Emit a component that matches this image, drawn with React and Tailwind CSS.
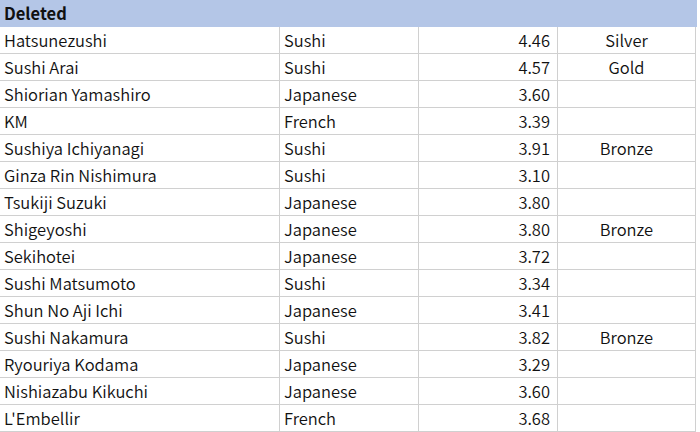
import React from 'react';

const rows = [
  ['Hatsunezushi', 'Sushi', '4.46', 'Silver'],
  ['Sushi Arai', 'Sushi', '4.57', 'Gold'],
  ['Shiorian Yamashiro', 'Japanese', '3.60', ''],
  ['KM', 'French', '3.39', ''],
  ['Sushiya Ichiyanagi', 'Sushi', '3.91', 'Bronze'],
  ['Ginza Rin Nishimura', 'Sushi', '3.10', ''],
  ['Tsukiji Suzuki', 'Japanese', '3.80', ''],
  ['Shigeyoshi', 'Japanese', '3.80', 'Bronze'],
  ['Sekihotei', 'Japanese', '3.72', ''],
  ['Sushi Matsumoto', 'Sushi', '3.34', ''],
  ['Shun No Aji Ichi', 'Japanese', '3.41', ''],
  ['Sushi Nakamura', 'Sushi', '3.82', 'Bronze'],
  ['Ryouriya Kodama', 'Japanese', '3.29', ''],
  ['Nishiazabu Kikuchi', 'Japanese', '3.60', ''],
  ["L'Embellir", 'French', '3.68', ''],
];

const App = () => {
  return (
    <div className="w-[700px] h-[432px] bg-white overflow-hidden text-[16.5px] text-[#111] font-[350] font-['Noto_Sans_CJK_JP','Noto_Sans',sans-serif]">
      <div className="h-[27px] w-[697px] bg-[#b4c6e7] flex items-center px-1 font-bold">
        Deleted
      </div>
      {rows.map((r, i) => (
        <div key={i} className="grid grid-cols-[280px_139px_139px_138px] h-[27px]">
          <div className="border-b border-r border-[#d0d0d0] flex items-center px-1 whitespace-nowrap">{r[0]}</div>
          <div className="border-b border-r border-[#d0d0d0] flex items-center px-1">{r[1]}</div>
          <div className="border-b border-r border-[#d0d0d0] flex items-center justify-end pr-[7px]">{r[2]}</div>
          <div className="border-b border-r border-[#d0d0d0] flex items-center justify-center">{r[3]}</div>
        </div>
      ))}
    </div>
  );
};

export default App;
